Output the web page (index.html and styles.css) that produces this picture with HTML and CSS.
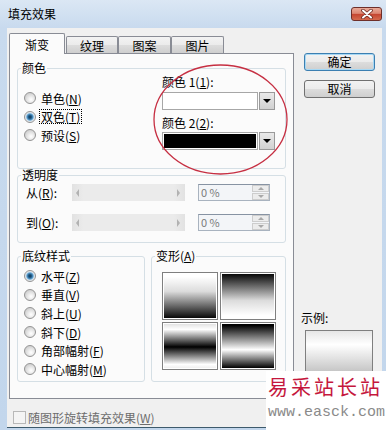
FILE: index.html
```html
<!DOCTYPE html>
<html>
<head>
<meta charset="utf-8">
<link rel="stylesheet" href="styles.css">
</head>
<body>
<div class="window">
  <div class="titlebar">
    <span class="title">填充效果</span>
    <div class="close">
      <svg width="14" height="10" viewBox="0 0 14 10">
        <path d="M3 1.5 L11 8.5 M11 1.5 L3 8.5" stroke="#6a2a22" stroke-width="3.6" stroke-linecap="round"/>
        <path d="M3 1.5 L11 8.5 M11 1.5 L3 8.5" stroke="#ffffff" stroke-width="2" stroke-linecap="round"/>
      </svg>
    </div>
  </div>
  <div class="client">
    <div class="main">
      <div class="tabctl">
        <div class="tabs">
          <div class="tab active">渐变</div>
          <div class="tab t2">纹理</div>
          <div class="tab t3">图案</div>
          <div class="tab t4">图片</div>
        </div>
        <div class="panel">
          <div class="group g-color">
            <div class="gtitle">颜色</div>
            <div class="color-body">
              <div class="radios r3">
                <div class="radio"><span class="rb"></span><span class="rt">单色(<u>N</u>)</span></div>
                <div class="radio"><span class="rb on"></span><span class="rt focus">双色(<u>T</u>)</span></div>
                <div class="radio"><span class="rb"></span><span class="rt">预设(<u>S</u>)</span></div>
              </div>
              <div class="combos">
                <div class="clabel l1">颜色 1(<u>1</u>):</div>
                <div class="combo c1"><div class="field"></div><div class="drop"><span class="tri"></span></div></div>
                <div class="clabel l2">颜色 2(<u>2</u>):</div>
                <div class="combo c2"><div class="field black"></div><div class="drop"><span class="tri"></span></div></div>
              </div>
            </div>
          </div>
          <div class="group g-trans">
            <div class="gtitle">透明度</div>
            <div class="trow first">
              <div class="tlabel">从(<u>R</u>):</div>
              <div class="scroll"><span class="al"></span><span class="ar"></span></div>
              <div class="spin"><div class="stext">0 %</div><div class="sbtns"><div class="sb"><span class="up"></span></div><div class="sb"><span class="dn"></span></div></div></div>
            </div>
            <div class="trow second">
              <div class="tlabel">到(<u>O</u>):</div>
              <div class="scroll"><span class="al"></span><span class="ar"></span></div>
              <div class="spin"><div class="stext">0 %</div><div class="sbtns"><div class="sb"><span class="up"></span></div><div class="sb"><span class="dn"></span></div></div></div>
            </div>
          </div>
          <div class="row3">
            <div class="group g-tex">
              <div class="gtitle">底纹样式</div>
              <div class="radios r6">
                <div class="radio"><span class="rb on"></span><span class="rt">水平(<u>Z</u>)</span></div>
                <div class="radio"><span class="rb"></span><span class="rt">垂直(<u>V</u>)</span></div>
                <div class="radio"><span class="rb"></span><span class="rt">斜上(<u>U</u>)</span></div>
                <div class="radio"><span class="rb"></span><span class="rt">斜下(<u>D</u>)</span></div>
                <div class="radio"><span class="rb"></span><span class="rt">角部幅射(<u>F</u>)</span></div>
                <div class="radio"><span class="rb"></span><span class="rt">中心幅射(<u>M</u>)</span></div>
              </div>
            </div>
            <div class="group g-var">
              <div class="gtitle">变形(<u>A</u>)</div>
              <div class="swatches">
                <div class="sw s1"></div>
                <div class="sw s2"></div>
                <div class="sw s3"></div>
                <div class="sw s4"></div>
              </div>
            </div>
          </div>
        </div>
      </div>
      <div class="side">
        <div class="btn default">确定</div>
        <div class="btn cancel">取消</div>
        <div class="plabel">示例:</div>
        <div class="preview"></div>
      </div>
    </div>
    <div class="bottom">
      <span class="cb"></span><span class="cbt">随图形旋转填充效果(<u>W</u>)</span>
    </div>
  </div>
  <svg class="ellipse" width="137" height="113" viewBox="0 0 137 113">
    <ellipse cx="68.5" cy="56.5" rx="66.5" ry="54.5" fill="none" stroke="#c62f42" stroke-width="1.3"/>
  </svg>
  <div class="watermark">
    <div class="wm1">易采站长站</div>
    <div class="wm2">www.easck.com</div>
  </div>
</div>
</body>
</html>
```

FILE: styles.css
```css
* { box-sizing: border-box; }
html, body { margin: 0; padding: 0; }
body {
  width: 386px;
  height: 430px;
  overflow: hidden;
  font-family: "Noto Sans CJK SC", "Liberation Sans", sans-serif;
  font-size: 12px;
  color: #000;
}
u { text-decoration: underline; text-underline-offset: 1px; }

.window {
  position: relative;
  width: 386px;
  height: 430px;
  display: flex;
  flex-direction: column;
  background: linear-gradient(#dbe7f4, #c8daee 28px, #c2d6ec);
}

.titlebar {
  height: 28px;
  flex: none;
  display: flex;
  align-items: center;
  justify-content: space-between;
  padding: 0 4px 0 8px;
}
.title { font-size: 12px; line-height: 14px; }
.close {
  width: 31px;
  height: 14px;
  border: 1px solid #6e2f29;
  border-radius: 3px;
  background: linear-gradient(#eaaa98, #dc8672 45%, #c54530 52%, #d46a4e);
  display: flex;
  align-items: center;
  justify-content: center;
}

.client {
  flex: 1;
  margin: 0 4px 2px 7px;
  background: #f0f0f0;
  padding: 5px 0 0 2px;
  border-bottom: 1px solid #3d5a6c;
  display: flex;
  flex-direction: column;
}

.main { display: flex; gap: 10px; }

.tabctl { width: 285px; }
.tabs { height: 20px; display: flex; align-items: flex-end; }
.tab {
  height: 17px;
  border: 1px solid #898c95;
  border-bottom: none;
  border-radius: 2px 2px 0 0;
  background: linear-gradient(#f3f3f3, #ebebeb 50%, #dddddd 50%, #cfcfcf);
  display: flex;
  justify-content: center;
  padding-top: 2px;
  line-height: 14px;
}
.tab.active {
  width: 56px;
  height: 21px;
  margin-bottom: -1px;
  position: relative;
  z-index: 1;
  background: #fbfbfb;
  padding-top: 4px;
}
.tab.t2 { width: 52px; margin-left: 1px; }
.tab.t3 { width: 53px; }
.tab.t4 { width: 53px; }

.panel {
  height: 346px;
  border: 1px solid #898c95;
  background: #fbfbfb;
  padding: 0 7px;
}

.group {
  border: 1px solid #d5dfe5;
  border-radius: 3px;
}
.gtitle {
  width: fit-content;
  margin: -7px 0 0 3px;
  padding: 0 1px;
  line-height: 12px;
  height: 12px;
  background: #fbfbfb;
}

.g-color { margin-top: 14px; height: 101px; }
.color-body { display: flex; padding-left: 6px; }
.radios { display: flex; flex-direction: column; }
.r3 { width: 138px; margin-top: 15px; }
.r3 .radio { height: 18.5px; }
.radio { display: flex; align-items: center; gap: 5px; }
.rb {
  width: 12px;
  height: 12px;
  flex: none;
  border-radius: 50%;
  border: 1px solid #939393;
  background: radial-gradient(circle at 60% 65%, #ffffff 0, #f2f2f2 2px, #d4d4d4 6px);
}
.rb.on {
  background: radial-gradient(circle at 50% 50%, #0e3652 0, #245f8c 1.8px, #5fa3d4 3.2px, #c9dbe8 4px, #eeeeee 5px);
}
.rt { line-height: 13px; }
.rt.focus { outline: 1px dotted #000; outline-offset: 0px; padding: 0 1px; margin-left: -1px; }

.combos { display: flex; flex-direction: column; margin-top: 2px; }
.clabel { line-height: 12px; height: 12px; }
.l2 { margin-top: 7px; }
.combo { display: flex; width: 113px; height: 18px; gap: 1px; }
.c1 { margin-top: 4px; }
.c2 { margin-top: 3px; }
.field {
  flex: 1;
  border: 1px solid #a7a7a7;
  box-shadow: inset 0 0 0 1px #ffffff;
  background: #ffffff;
}
.field.black { background: #000; box-shadow: inset 0 0 0 1px #ffffff; }
.drop {
  width: 16px;
  border: 1px solid #9a9a9a;
  background: linear-gradient(#e9e9e9, #d2d2d2);
  display: flex;
  align-items: center;
  justify-content: center;
}
.tri {
  width: 0; height: 0;
  border-left: 4px solid transparent;
  border-right: 4px solid transparent;
  border-top: 4px solid #000;
}

.g-trans { margin-top: 6px; height: 68px; }
.trow { display: flex; align-items: center; padding-left: 8px; height: 17px; }
.trow.first { margin-top: 3px; }
.trow.second { margin-top: 13px; }
.tlabel { width: 46px; line-height: 12px; }
.scroll {
  width: 113px;
  height: 17px;
  background: linear-gradient(90deg, #e2e2e2, #ebebeb 10%, #ebebeb 90%, #e2e2e2);
  display: flex;
  align-items: center;
  justify-content: space-between;
  padding: 0 5px 0 4px;
}
.al, .ar { width: 0; height: 0; border-top: 4px solid transparent; border-bottom: 4px solid transparent; }
.al { border-right: 3px solid #b2b2b2; }
.ar { border-left: 3px solid #b2b2b2; }
.spin {
  width: 72px;
  height: 17px;
  margin-left: 13px;
  border: 1px solid #a9b3bf;
  border-top-color: #8793a3;
  background: #f3f5f8;
  display: flex;
}
.stext { flex: 1; color: #7a7a7a; line-height: 15px; padding-left: 2px; font-size: 11px; }
.sbtns { width: 17px; display: flex; flex-direction: column; gap: 1px; }
.sb {
  flex: 1;
  border: 1px solid #cdcdcd;
  background: #ececec;
  display: flex;
  align-items: center;
  justify-content: center;
}
.up, .dn { width: 0; height: 0; border-left: 3px solid transparent; border-right: 3px solid transparent; }
.up { border-bottom: 3px solid #a8a8a8; }
.dn { border-top: 3px solid #a8a8a8; }

.row3 { display: flex; gap: 6px; margin-top: 13px; }
.g-tex { width: 128px; height: 126px; }
.r6 { margin-top: 5px; padding-left: 6px; }
.r6 .radio { height: 18.6px; }
.g-var { width: 135px; height: 126px; }
.swatches {
  display: grid;
  grid-template-columns: 56px 56px;
  grid-template-rows: 48px 48px;
  column-gap: 2px;
  row-gap: 2px;
  margin: 10px 0 0 10px;
}
.sw { border: 1px solid #7f7f7f; box-shadow: inset 0 0 0 1px #ffffff; }
.s1 { background: linear-gradient(#ffffff 8%, #dcdcdc 40%, #000000 100%); }
.s2 { background: linear-gradient(#000000 0%, #dcdcdc 60%, #ffffff 92%); }
.s3 { background: linear-gradient(#dedede 0%, #ffffff 14%, #000000 52%, #ffffff 90%, #ececec 100%); }
.s4 { background: linear-gradient(#000000 5%, #ffffff 58%, #000000 98%); }

.side { width: 71px; padding-top: 20px; display: flex; flex-direction: column; }
.btn {
  height: 18px;
  border: 1px solid #707070;
  border-radius: 3px;
  background: linear-gradient(#f2f2f2, #ebebeb 50%, #dddddd 50%, #cfcfcf);
  display: flex;
  align-items: center;
  justify-content: center;
  line-height: 14px;
}
.btn.default {
  border-color: #3c7fb1;
  box-shadow: inset 0 0 0 1px #a7d8f4;
}
.btn.cancel { margin-top: 9px; }
.plabel { margin-top: 214px; margin-left: -3px; line-height: 12px; height: 12px; }
.preview {
  margin-top: 6px;
  margin-left: 1px;
  width: 68px;
  height: 64px;
  border: 1px solid #7f7f7f;
  background: linear-gradient(#e6e6e6 0%, #ffffff 22%, #bfbfbf 70%, #8c8c8c 100%);
}

.bottom { display: flex; align-items: center; margin-top: 12px; padding-left: 4px; gap: 2px; }
.cb { width: 13px; height: 13px; border: 1px solid #b8b8b8; background: #f4f4f4; }
.cbt { color: #6d6d6d; line-height: 13px; }

.ellipse { position: absolute; left: 152px; top: 63px; }

.watermark {
  position: absolute;
  left: 266px;
  top: 371px;
  width: 120px;
  height: 59px;
  background: #ffffff;
  padding: 3px 0 0 2px;
}
.wm1 {
  color: #c5173d;
  font-size: 20px;
  line-height: 26px;
  letter-spacing: 3px;
}
.wm2 {
  color: #8a8a8a;
  font-family: "Liberation Mono", monospace;
  font-size: 15px;
  line-height: 18px;
  margin-top: 4px;
}
```
